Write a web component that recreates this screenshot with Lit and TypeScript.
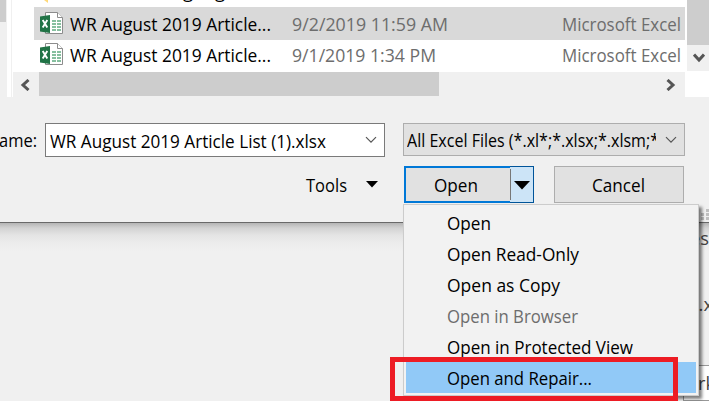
import { LitElement, html, svg, css } from "lit";
import { customElement } from "lit/decorators.js";

// One line of text set to an exact advance width; b is the baseline in the line box.
const line = (text: string, w: number, b: number, h: number, cls = "") => html`
  <svg class="line ${cls}" width=${w} height=${h}>
    <text x="0" y=${b} textLength=${w} lengthAdjust="spacingAndGlyphs">${text}</text>
  </svg>`;

const excelIcon = html`<svg class="xl" width="24" height="23" viewBox="0 0 24 23">
  <path d="M5.5 .5H17.5L22.5 5.5V21.5H5.5Z" fill="#fff" stroke="#8c8c8c"/>
  <path d="M17.5 .5V5.5H22.5" fill="#fff" stroke="#8c8c8c"/>
  ${[8, 11, 14, 17].map(y => svg`<path d="M12 ${y}h4v2h-4zM17 ${y}h4v2h-4z" fill="#86bf9f"/>`)}
  <path d="M0 4.5L10 3V21L0 19.5Z" fill="#217346"/>
  <path d="M2.7 8L7.3 15.5M7.3 8L2.7 15.5" stroke="#fff" stroke-width="1.9"/>
</svg>`;

const chevron = html`<svg class="chev" width="12" height="8"><path d="M1 1.2L6 6.2L11 1.2" fill="none" stroke="#555" stroke-width="1.2"/></svg>`;

const items: [string, number, string][] = [
  ["Open", 44, ""], ["Open Read-Only", 132, ""], ["Open as Copy", 113, ""],
  ["Open in Browser", 131, "dim"], ["Open in Protected View", 186, ""], ["Open and Repair...", 145, "hot"],
];

@customElement("app-root")
export class AppRoot extends LitElement {
  static styles = css`
    :host { display: block; position: relative; width: 709px; height: 401px; overflow: hidden; background: #f0f0f0;
      font-family: "Open Sans", "Noto Sans", sans-serif; font-size: 18.7px; color: #000; }
    * { box-sizing: border-box; }
    svg { display: block; flex: none; }
    .line { overflow: visible; fill: #000; }
    .grey { fill: #6d6d6d; }
    .dialog { height: 223px; border-bottom: 1px solid #696969; background: #f0f0f0; }
    .browser { display: flex; height: 97px; }
    .nav { width: 7px; height: 97px; padding-right: 1px; }
    .navthumb { height: 22px; background: #cdcdcd; }
    .gap { width: 6px; background: linear-gradient(90deg, #fff 4px, #f0f0f0 4px, #f0f0f0 5px, #fff 5px); }
    .files { width: 672px; background: #fff; }
    .row { display: flex; margin-left: 21px; height: 31px; overflow: hidden; }
    .r0 { height: 7px; }
    .sel { height: 33px; background: #d9d9d9; }
    .r2 { height: 32px; }
    .xl { margin: 5px 6px 0 6px; }
    .r2 .xl { margin-top: 3px; }
    .folder { margin: 0 134px 0 10px; }
    .tail { margin-right: 22px; }
    .slash { margin-left: 76px; }
    .slash2 { margin-left: 19px; }
    .date { width: 270px; margin-left: 21px; flex: none; }
    .hbar { display: flex; height: 25px; background: #f0f0f0; }
    .arrow { width: 26px; display: flex; align-items: center; justify-content: center; }
    .hthumb { width: 400px; height: 24px; background: #cdcdcd; }
    .right { margin-left: auto; margin-right: 1px; }
    .vbar { flex: 1; background: #fff; padding-left: 2px; }
    .vthumb { height: 45px; background: #cdcdcd; }
    .down { height: 26px; background: #f0f0f0; display: flex; align-items: center; justify-content: center; padding-left: 2px; }
    .fields { display: flex; margin-top: 26px; height: 34px; }
    .label { width: 45px; overflow: hidden; }
    .label .line { margin-left: -1px; }
    .combo { display: flex; justify-content: space-between; width: 340px; height: 34px; border: 1px solid #7a7a7a; background: #fff; padding: 0 7px 0 4px; }
    .filter { width: 282px; height: 33px; margin-left: 18px; border-color: #adadad; background: #e1e1e1; padding-left: 3px; }
    .clip { width: 249px; overflow: hidden; }
    .chev { margin-top: 12px; }
    .actions { display: flex; margin-top: 9px; height: 37px; }
    .tools { display: flex; width: 404px; padding-left: 306px; }
    .tri { margin: 15px 0 0 19px; }
    .split { display: flex; width: 130px; }
    .open { width: 106px; border: 2px solid #0078d7; border-right: 0; background: #e1e1e1; padding-left: 28px; }
    .drop { width: 24px; border: 1px solid #005499; border-left: 0; background: #cce4f7; display: flex; }
    .sep { width: 1px; margin: 2px 3px 2px 0; background: #777; }
    .drop svg { margin-top: 14px; }
    .cancel { width: 130px; margin-left: 20px; border: 1px solid #adadad; background: #e1e1e1; padding-left: 37px; }
    .behind { height: 178px; background: linear-gradient(#b5b5b5 0, #d2d2d2 5px, #e4e4e4 12px, #ececec 20px, #f0f0f0 28px); display: flex; flex-direction: column; align-items: flex-end; }
    .behind .line { fill: #444; }
    .behind .ext { margin-right: -4px; }
    .box { width: 26px; height: 36px; margin-top: 62px; border: 1px solid #999; border-right: 0; background: #fff; padding-left: 14px; overflow: hidden; }
    .grip { position: absolute; left: 700px; top: 209px; }
    .menu { position: absolute; left: 403px; top: 204px; width: 296px; height: 192px; padding: 2px; border: 1px solid #ccc;
      background: #f2f2f2; box-shadow: 3px 3px 3px rgba(0,0,0,.5); }
    .item { height: 31px; padding-left: 41px; }
    .item.dim .line { fill: #6d6d6d; }
    .hot { background: #91c9f7; }
    .frame { position: absolute; left: 390px; top: 357px; width: 288px; height: 44px; border: 5px solid #ed1c24; }
  `;

  render() {
    return html`
      <div class="dialog">
        <div class="browser">
          <div class="nav"><div class="navthumb"></div></div>
          <div class="gap"></div>
          <div class="files">
            <div class="row r0">
              <svg class="folder" width="5" height="4"><path d="M0 0H4V3Z" fill="#ffd978"/></svg>
              ${line("g", 10, -2, 7, "tail")}${line("g", 10, -2, 7)}
              ${line("/", 8, 0, 7, "grey slash")}${line("/", 8, 0, 7, "grey slash2")}
            </div>
            <div class="row sel">${excelIcon}${line("WR August 2019 Article...", 201, 24, 33)}
              <div class="date">${line("9/2/2019 11:59 AM", 156, 24, 33, "grey")}</div>
              ${line("Microsoft Excel", 119, 24, 33, "grey")}</div>
            <div class="row r2">${excelIcon}${line("WR August 2019 Article...", 201, 22, 32)}
              <div class="date">${line("9/1/2019 1:34 PM", 144, 22, 32, "grey")}</div>
              ${line("Microsoft Excel", 119, 22, 32, "grey")}</div>
            <div class="hbar">
              <div class="arrow"><svg width="12" height="12"><path d="M8.5 1L3 6L8.5 11" fill="none" stroke="#555" stroke-width="3"/></svg></div>
              <div class="hthumb"></div>
              <div class="arrow right"><svg width="10" height="12"><path d="M1.5 1L7 6L1.5 11" fill="none" stroke="#555" stroke-width="3"/></svg></div>
            </div>
          </div>
          <div class="vbar"><div class="vthumb"></div>
            <div class="down"><svg width="12" height="10"><path d="M1 1.5L6 7L11 1.5" fill="none" stroke="#555" stroke-width="3"/></svg></div>
          </div>
        </div>
        <div class="fields">
          <div class="label">${line("ame:", 38, 24, 34)}</div>
          <div class="combo">${line("WR August 2019 Article List (1).xlsx", 276, 24, 32)}${chevron}</div>
          <div class="combo filter"><div class="clip">${line("All Excel Files (*.xl*;*.xlsx;*.xlsm;*", 252, 23, 31)}</div>${chevron}</div>
        </div>
        <div class="actions">
          <div class="tools">${line("Tools", 41, 26, 37)}
            <svg class="tri" width="12" height="7"><path d="M0 0H12L6 6.5Z"/></svg></div>
          <div class="split">
            <div class="open">${line("Open", 44, 24, 33)}</div>
            <div class="drop"><div class="sep"></div><svg width="16" height="9"><path d="M0 0H16L8 8.5Z"/></svg></div>
          </div>
          <div class="cancel">${line("Cancel", 53, 25, 35)}</div>
        </div>
      </div>
      <div class="behind">
        ${line("es", 19, 22, 50)}
        ${line("t.x", 21, 38, 30, "ext")}
        <div class="box">${line("rk", 17, 24, 34)}</div>
      </div>
      <svg class="grip" width="9" height="11" fill="#bfbfbf"><path d="M6 0h3v3h-3zM1 4h3v3h-3zM6 4h3v3h-3zM1 8h3v3h-3zM6 8h3v3h-3z"/></svg>
      <div class="menu">${items.map(([t, w, c]) => html`<div class="item ${c}">${line(t, w, 23, 31)}</div>`)}</div>
      <div class="frame"></div>`;
  }
}
